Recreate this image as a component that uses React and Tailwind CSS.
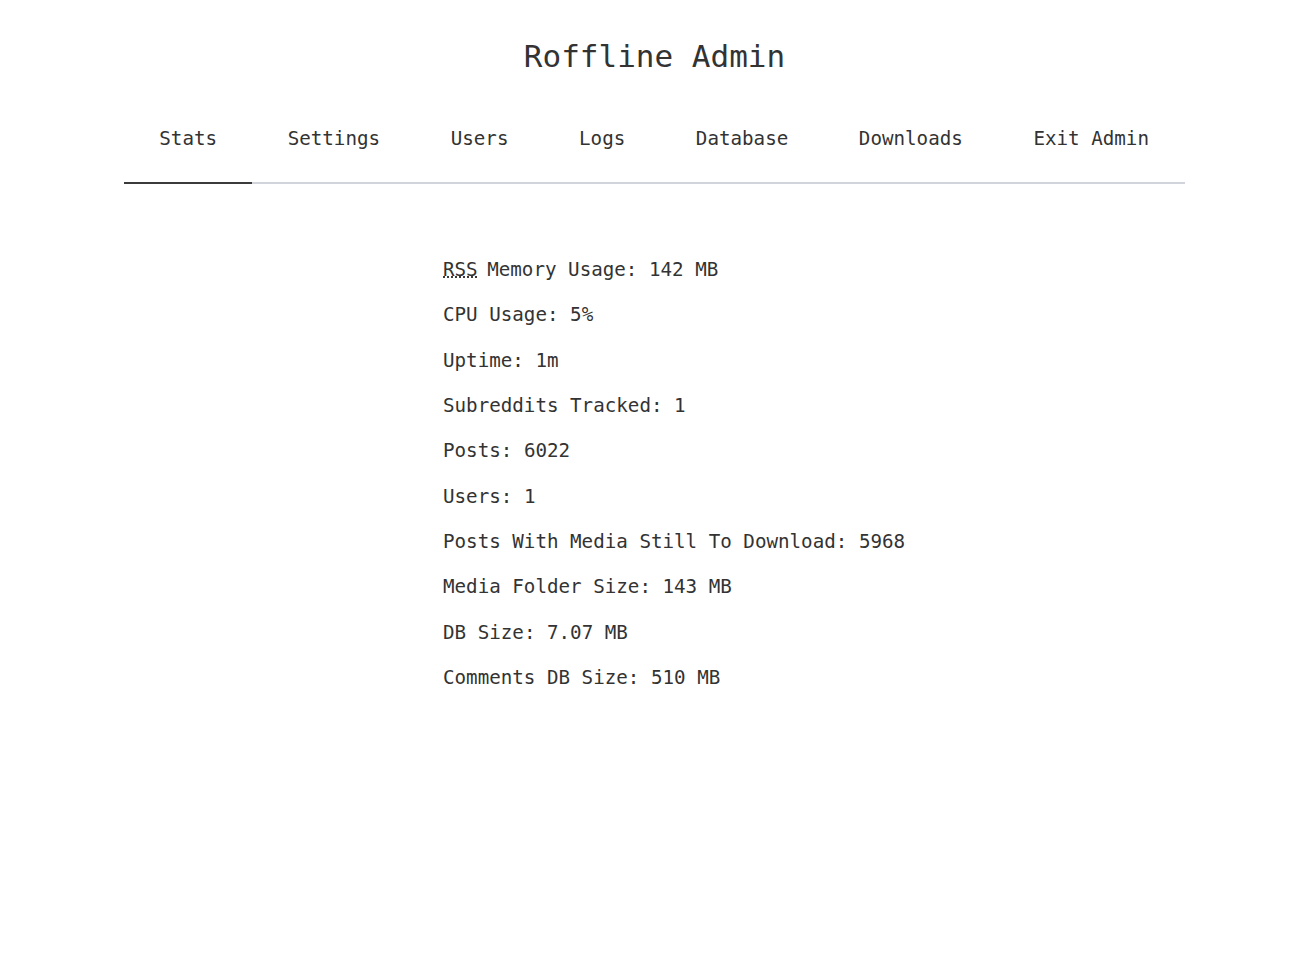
const tabs = ['Stats', 'Settings', 'Users', 'Logs', 'Database', 'Downloads', 'Exit Admin']

const stats = [
  ['Memory Usage', '142 MB', true],
  ['CPU Usage', '5%'],
  ['Uptime', '1m'],
  ['Subreddits Tracked', '1'],
  ['Posts', '6022'],
  ['Users', '1'],
  ['Posts With Media Still To Download', '5968'],
  ['Media Folder Size', '143 MB'],
  ['DB Size', '7.07 MB'],
  ['Comments DB Size', '510 MB'],
]

export default function App() {
  return (
    <div className="min-h-screen bg-white text-[#333333] font-['DejaVu_Sans_Mono',monospace]">
      <h1 className="pt-[38px] text-center text-[31px] leading-[36px]">Roffline Admin</h1>

      <nav className="w-[1061px] mx-auto mt-[54px] flex border-b-2 border-[#d1d5db]">
        {tabs.map((t, i) => (
          <button
            key={t}
            className={
              'px-[35.3px] pb-[32px] text-[19.2px] leading-[22px] whitespace-nowrap -mb-[2px] border-b-2 ' +
              (i === 0 ? 'border-[#3b3b3b]' : 'border-transparent')
            }
          >
            {t}
          </button>
        ))}
      </nav>

      <div className="w-[423px] mx-auto mt-[63px] text-[19.2px] leading-[45.33px] whitespace-nowrap">
        {stats.map(([label, value, rss]) => (
          <p key={label}>
            {rss && <><abbr title="Resident Set Size" className="mr-[-2px]">RSS</abbr> </>}
            {label}: {value}
          </p>
        ))}
      </div>
    </div>
  )
}
